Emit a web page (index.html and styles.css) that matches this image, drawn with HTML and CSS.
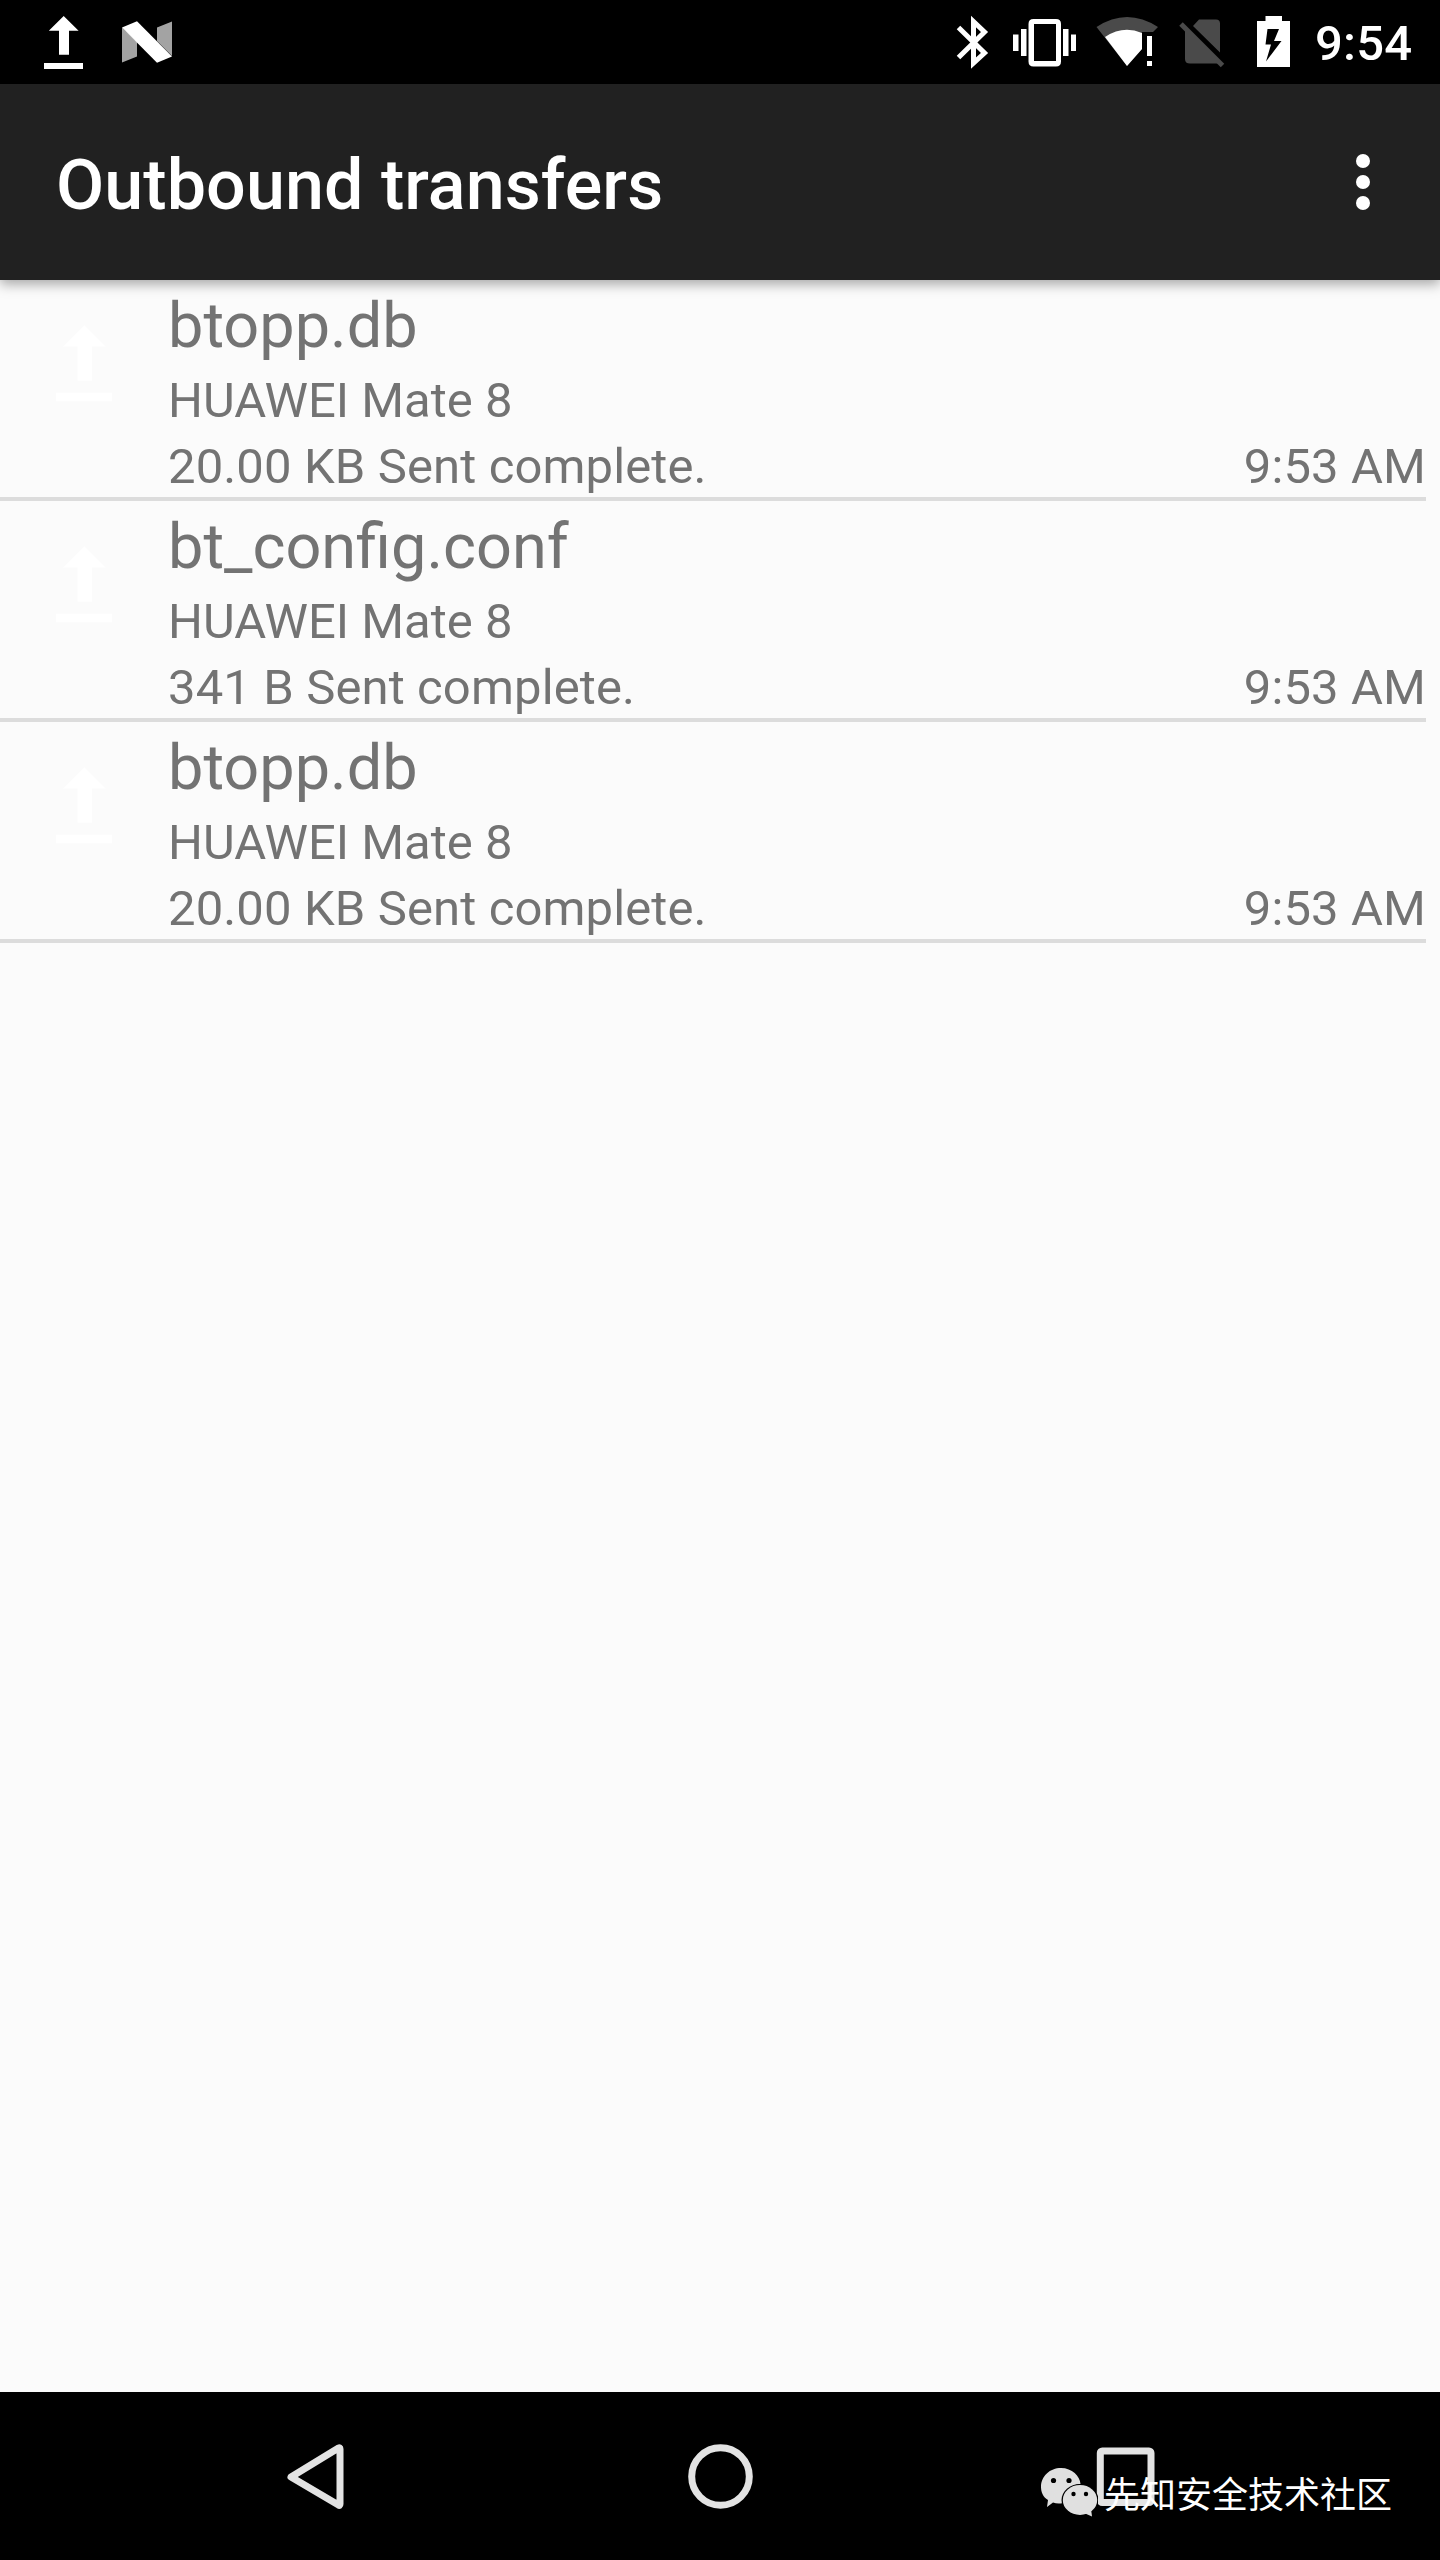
FILE: index.html
```html
<!DOCTYPE html>
<html lang="en">
<head>
<meta charset="utf-8">
<title>Outbound transfers</title>
<link rel="stylesheet" href="styles.css">
</head>
<body>
<svg class="defs" width="0" height="0"><defs>
<symbol id="upload" viewBox="0 0 39 54"><path d="M19.7 0L34.6 14.8H25V38.7H15V14.8H4.8ZM0 47H39V53H0Z"/></symbol>
</defs></svg>
<div class="screen">
  <header class="status">
    <svg class="status-icons" width="240" height="84" viewBox="0 0 240 84" fill="#fff">
      <use href="#upload" x="44" y="16" width="39" height="54"/>
      <path d="M122 27.5L137 42V56.5L122 62.5ZM172 21.5V56L157 41V27.5Z" fill="#a3a3a3"/>
      <path d="M122 27.5L137 21.3L172 56.5L157 62.7Z"/>
    </svg>
    <svg class="status-icons" width="382" height="84" viewBox="920 0 382 84" fill="#fff">
      <path d="M958.5 27.5L984.5 53L973.5 63V21.5L984.5 32L958.5 57.5" fill="none" stroke="#fff" stroke-width="5"/>
      <path fill-rule="evenodd" d="M1033 19H1056Q1061 19 1061 24V61.500Q1061 66.500 1056 66.500H1033.500Q1028.500 66.500 1028.500 61.500V24Q1028.500 19 1033.500 19ZM1034 24V61H1056V24ZM1013 34.500H1018.500V51H1013ZM1021 29H1026.500V56H1021ZM1063 29H1068.500V56H1063ZM1071 34.500H1076V51H1071Z"/>
      <path d="M1096.500 27Q1127 7 1158 27L1153 32H1142V49L1127 66Z" fill="#4a4a4a"/>
      <path d="M1105 37Q1123 25 1142 33V49L1127 66ZM1147 36H1152V56H1147ZM1147 61H1152V66H1147Z"/>
      <path d="M1193 26L1199 19.500H1216Q1220 19.500 1220 23.500V52.500ZM1185 28L1220.500 63.500H1190Q1185 63.500 1185 59Z" fill="#4a4a4a"/>
      <path d="M1181 24L1222.500 65.500" stroke="#4a4a4a" stroke-width="5"/>
      <path fill-rule="evenodd" d="M1265.500 16H1282V21H1290V67H1257V21H1265.500ZM1267.500 29L1265.500 44.500H1271L1266 61.500L1281.500 41H1274L1279 29Z"/>
    </svg>
    <span class="clock">9:54</span>
  </header>
  <div class="appbar">
    <h1>Outbound transfers</h1>
    <svg width="14" height="56" viewBox="0 0 14 56" fill="#fff"><circle cx="7" cy="7" r="7"/><circle cx="7" cy="28" r="7"/><circle cx="7" cy="49" r="7"/></svg>
  </div>
  <main>
    <article class="row">
      <svg class="sent"><use href="#upload"/></svg>
      <div class="info"><h2>btopp.db</h2><p>HUAWEI Mate 8</p><p class="result"><span>20.00 KB Sent complete.</span><time>9:53 AM</time></p></div>
    </article>
    <article class="row">
      <svg class="sent"><use href="#upload"/></svg>
      <div class="info"><h2>bt_config.conf</h2><p>HUAWEI Mate 8</p><p class="result"><span>341 B Sent complete.</span><time>9:53 AM</time></p></div>
    </article>
    <article class="row">
      <svg class="sent"><use href="#upload"/></svg>
      <div class="info"><h2>btopp.db</h2><p>HUAWEI Mate 8</p><p class="result"><span>20.00 KB Sent complete.</span><time>9:53 AM</time></p></div>
    </article>
  </main>
  <footer class="nav">
    <svg width="1440" height="168" viewBox="0 2392 1440 168" fill="none" stroke="#e3e3e3" stroke-width="7" stroke-linejoin="round">
      <path d="M291 2477L338.500 2448Q340 2447.500 340 2449V2504Q340 2506 338.500 2505Z"/>
      <circle cx="720.500" cy="2476.500" r="28.800"/>
      <rect x="1100.300" y="2451" width="50.700" height="51.500" rx="2"/>
    </svg>
    <div class="watermark">
      <svg width="57" height="50" viewBox="0 0 57 50" fill="#e0e0e0">
        <path d="M20 0C31 0 39 8 39.500 16C28 17 20 25 22 35C18 36 15 35.500 12 34.500L6 39L7 32C2 29 0 24 0 19C0 8 9 0 20 0Z"/>
        <ellipse cx="39" cy="32" rx="18.500" ry="16" fill="#000"/>
        <ellipse cx="39" cy="32" rx="17.200" ry="15"/><path d="M43 45L51 48.500L50 41Z"/>
        <g fill="#000"><circle cx="12.500" cy="12.500" r="2.600"/><circle cx="28" cy="12.500" r="2.600"/><circle cx="32.500" cy="26" r="2.200"/><circle cx="45" cy="26" r="2.200"/></g>
      </svg>
      <span lang="zh-CN">先知安全技术社区</span>
    </div>
  </footer>
</div>
</body>
</html>
```
FILE: styles.css
```css
* { box-sizing: border-box; margin: 0; padding: 0; }
body { background: #fbfbfb; font-family: Roboto, "Noto Sans CJK SC", sans-serif; }
svg { display: block; flex: none; }
.defs { position: absolute; }
.screen { width: 1440px; height: 2560px; display: flex; flex-direction: column; }
.status { height: 84px; background: #000; display: flex; align-items: center; }
.status-icons:first-child { margin-right: 680px; }
.clock { margin-left: 13px; color: #fff; font-size: 49px; font-weight: 500; line-height: 58px; padding-top: 4px; letter-spacing: .2px; }
.appbar { height: 196px; background: #212121; color: #fff; display: flex; align-items: center; justify-content: space-between; padding: 0 70px 0 56px; box-shadow: 0 4px 12px rgba(0, 0, 0, .35); }
h1 { font-size: 70px; font-weight: 500; line-height: 82px; padding-top: 5px; letter-spacing: .07px; }
main { flex: 1; color: #737373; }
.row { height: 221px; margin-right: 14px; border-bottom: 4px solid #dcdcdc; display: flex; }
.sent { width: 56px; height: 78px; margin: 45px 56px 0; fill: #fff; }
.info { flex: 1; }
h2 { font-size: 63px; font-weight: 400; line-height: 84px; padding-top: 4px; }
p { font-size: 49px; line-height: 66px; }
.result { display: flex; justify-content: space-between; letter-spacing: .12px; }
.nav { position: relative; height: 168px; background: #000; }
.watermark { position: absolute; left: 1041px; top: 76px; display: flex; align-items: flex-start; color: #fff; }
.watermark span { margin: -3px 0 0 6px; font-family: "Noto Sans CJK SC", sans-serif; font-size: 36px; line-height: 54px; }
```
